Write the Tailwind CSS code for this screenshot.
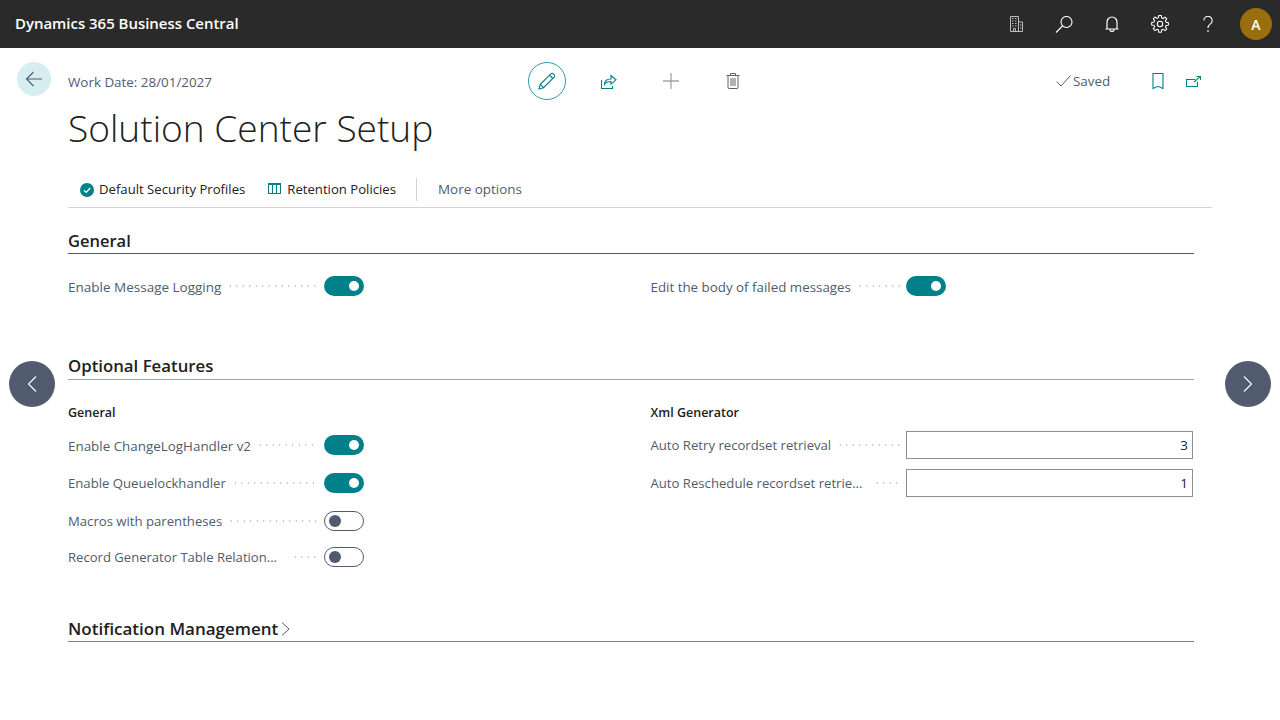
<!DOCTYPE html>
<html><head><meta charset="utf-8"><script src="https://cdn.jsdelivr.net/npm/@tailwindcss/browser@4"></script></head>
<body class="relative w-[1280px] h-[720px] overflow-hidden bg-white font-['Open_Sans',sans-serif] text-[13.4px] text-[#505C6D]">
<header class="flex h-12 items-center bg-[#2A2A2A] pl-[15px]">
  <div class="flex-1 pb-[2px] text-[14.950px] font-semibold text-white">Dynamics 365 Business Central</div>
  <div class="flex w-12 justify-center"><svg width="13" height="16" viewBox="0 0 13 16" fill="none" stroke="#BDBDBD"><path d="M.5 15.500V.5h8V15.500M8.500 6h4v9.500H.5M2 2.500h1.500M5 2.500h1.500M2 5h1.500M5 5h1.500M2 7.500h1.500M5 7.500h1.500M2 10h1.500M5 10h1.500M10 9h1.500M10 12h1.500M3.500 15.500v-3h2v3"/></svg></div>
  <div class="flex w-12 justify-center"><svg width="18" height="17" viewBox="0 0 18 17" fill="none" stroke="#fff" stroke-width="1.100"><circle cx="11.500" cy="6" r="5.500"/><path d="M7.500 10L1 16.500"/></svg></div>
  <div class="flex w-12 justify-center"><svg width="14" height="16" viewBox="0 0 14 16" fill="none" stroke="#fff" stroke-width="1.200"><path d="M2 12.500V6a5 5 0 0 1 10 0v6.500M.5 13h13M5 13.500a2 2 0 0 0 4 0"/></svg></div>
  <div class="flex w-12 justify-center"><svg width="18" height="18" viewBox="0 0 18 18" fill="none" stroke="#fff" stroke-width="1.100"><circle cx="9" cy="9" r="2.700"/><path d="M7.700 1h2.600l.4 2.400 1.500.7 2-1.400 1.800 1.800-1.400 2 .7 1.500 2.400.4v2.600l-2.400.4-.7 1.500 1.400 2-1.800 1.800-2-1.400-1.500.7-.4 2.400H7.700l-.4-2.400-1.500-.7-2 1.400L2 14.700l1.400-2-.7-1.500L.3 10.800V8.200l2.400-.4.700-1.500-1.400-2L3.800 2.500l2 1.400 1.500-.7z" transform="translate(.4 -.4) scale(.96)"/></svg></div>
  <div class="flex w-12 justify-center"><svg width="10" height="16" viewBox="0 0 10 16" fill="none" stroke="#fff" stroke-width="1.100"><path d="M.8 4.500a4.200 4.200 0 1 1 6.600 3.400C5.800 9 5 9.800 5 12M5 14v2"/></svg></div>
  <div class="flex w-12 justify-center"><div class="flex size-8 items-center justify-center rounded-full bg-[#986F0B] text-[14px] font-semibold text-white">A</div></div>
</header>

<div class="flex h-[66px] items-center pl-[17px]">
  <div class="flex size-[34px] -translate-y-[2px] items-center justify-center rounded-full bg-[#D6EEF1]"><svg width="18" height="16" viewBox="0 0 18 16" fill="none" stroke="#505C6D" stroke-width="1.100"><path d="M17 8H1.500M8.500 1L1.500 8l7 7"/></svg></div>
  <div class="ml-[17px] w-[460px] pt-[3px]">Work Date: 28/01/2027</div>
  <div class="flex size-[38px] items-center justify-center rounded-full border border-[#2E9CA3]"><svg width="18" height="18" viewBox="0 0 18 18" fill="none" stroke="#00818A" stroke-width="1.100"><path d="M1 17l1.300-4.600L12.800 1.900a1.700 1.700 0 0 1 2.400 0l.9.900a1.700 1.700 0 0 1 0 2.400L5.600 15.700zM2.300 12.400l3.300 3.300M11.500 3.200l3.300 3.300"/></svg></div>
  <div class="ml-[34px] flex w-[18px] justify-center"><svg width="16" height="15" viewBox="0 0 16 15" fill="none" stroke="#00818A" stroke-width="1.100"><path d="M.5 6v8.500h11V12M3.500 10.500c0-4 2.500-5.500 6.500-5.500V1.500l5 4.300-5 4.300V7.500c-3 0-5 .5-6.500 3z"/></svg></div>
  <div class="ml-[44px] flex w-[18px] justify-center"><svg width="16" height="16" viewBox="0 0 16 16" fill="none" stroke="#A0A4A9" stroke-width="1.300"><path d="M8 0v16M0 8h16"/></svg></div>
  <div class="ml-[44px] flex w-[18px] justify-center"><svg width="14" height="16" viewBox="0 0 14 16" fill="none" stroke="#5E6570" stroke-width="1"><path d="M.5 2.500h13M2 2.500v12a1 1 0 0 0 1 1h8a1 1 0 0 0 1-1v-12M4.500 2.500v-2h5v2M5 5v8M7 5v8M9 5v8"/></svg></div>
  <div class="ml-[313px] flex w-[16px] justify-center"><svg width="15" height="12" viewBox="0 0 15 12" fill="none" stroke="#505C6D" stroke-width="1"><path d="M.7 6.500L5 11 14.500.5"/></svg></div>
  <div class="ml-[2px] pt-[1px]">Saved</div>
  <div class="ml-[42px] flex"><svg width="12" height="16" viewBox="0 0 12 16" fill="none" stroke="#00818A" stroke-width="1.100"><path d="M1 .5h10v15L6 13.300 1 15.500z"/></svg></div>
  <div class="ml-[22px] flex"><svg width="15" height="11" viewBox="0 0 15 11" fill="none" stroke="#00818A" stroke-width="1.100"><path d="M9 3.500H.5v7h11V6M8 6L14 .7M10.500.5h4V4"/></svg></div>
</div>

<main class="pl-[68px]">
  <h1 class="-mt-[2px] h-[60px] text-[37.100px] font-light leading-[32px] text-[#212121]">Solution Center Setup</h1>
  <div class="flex h-[36px] w-[1144px] items-center border-b border-[#D1D3D6] pl-[12px] text-[13.150px] text-[#212121]">
    <svg width="14" height="14" viewBox="0 0 14 14"><circle cx="7" cy="7" r="7" fill="#00818A"/><path d="M4 7.200l2.200 2.200L10.200 5" fill="none" stroke="#fff" stroke-width="1.300"/></svg>
    <span class="ml-[5px]">Default Security Profiles</span>
    <svg class="ml-[23px] -translate-y-[1px]" width="13" height="12" viewBox="0 0 13 12" fill="none" stroke="#00818A" stroke-width="1.100"><path d="M.5.500h12v10H.5zM4.500 1v9.500M8.500 1v9.500M.5 1.500h12" /></svg>
    <span class="ml-[6px]">Retention Policies</span>
    <div class="ml-[20px] h-[23px] w-px bg-[#D1D3D6]"></div>
    <span class="ml-[21px] text-[13.450px] text-[#505C6D]">More options</span>
  </div>

  <section class="mt-[21px] w-[1126px]">
    <h2 class="h-[25px] border-b border-[#505C6D] text-[16.500px] font-semibold leading-[24px] text-[#212121]">General</h2>
    <div class="mt-[22px] grid grid-cols-[296px_295.500px] gap-x-[286.500px]">
      <div class="flex h-5 items-center"><span class="pt-[2px] text-[13.500px]">Enable Message Logging</span><div class="mx-[6px] h-[2px] flex-1 bg-[radial-gradient(circle,#B4B8BF_0.8px,transparent_1px)] bg-[length:6.500px_2px]"></div><div class="flex h-5 w-10 items-center justify-end rounded-full bg-[#00818A] pr-[5px]"><div class="size-[10px] rounded-full bg-white"></div></div></div>
      <div class="flex h-5 items-center"><span class="pt-[2px] text-[13.350px]">Edit the body of failed messages</span><div class="mx-[6px] h-[2px] flex-1 bg-[radial-gradient(circle,#B4B8BF_0.8px,transparent_1px)] bg-[length:6.500px_2px]"></div><div class="flex h-5 w-10 items-center justify-end rounded-full bg-[#00818A] pr-[5px]"><div class="size-[10px] rounded-full bg-white"></div></div></div>
    </div>
  </section>

  <section class="mt-[59px] w-[1126px]">
    <h2 class="h-[25px] border-b border-[#A0A4AE] text-[16.800px] font-semibold leading-[22px] text-[#212121]">Optional Features</h2>
    <div class="mt-[24px] grid grid-cols-[296px_542.500px] gap-x-[286.500px]">
      <div class="flex flex-col">
        <div class="text-[12.500px] font-semibold leading-[17px] text-[#212121]">General</div>
        <div class="mt-[14px] flex h-5 items-center"><span class="pt-[2px]">Enable ChangeLogHandler v2</span><div class="mx-[6px] h-[2px] flex-1 bg-[radial-gradient(circle,#B4B8BF_0.8px,transparent_1px)] bg-[length:6.500px_2px]"></div><div class="flex h-5 w-10 items-center justify-end rounded-full bg-[#00818A] pr-[5px]"><div class="size-[10px] rounded-full bg-white"></div></div></div>
        <div class="mt-[18px] flex h-5 items-center"><span class="pt-[2px] text-[13.150px]">Enable Queuelockhandler</span><div class="mx-[6px] h-[2px] flex-1 bg-[radial-gradient(circle,#B4B8BF_0.8px,transparent_1px)] bg-[length:6.500px_2px]"></div><div class="flex h-5 w-10 items-center justify-end rounded-full bg-[#00818A] pr-[5px]"><div class="size-[10px] rounded-full bg-white"></div></div></div>
        <div class="mt-[18px] flex h-5 items-center"><span class="pt-[2px] text-[13.150px]">Macros with parentheses</span><div class="mx-[6px] h-[2px] flex-1 bg-[radial-gradient(circle,#B4B8BF_0.8px,transparent_1px)] bg-[length:6.500px_2px]"></div><div class="flex h-5 w-10 items-center rounded-full border border-[#505C6D] pl-[4px]"><div class="size-[12px] rounded-full bg-[#505C6D]"></div></div></div>
        <div class="mt-[16px] flex h-5 items-center"><span class="w-[218px] whitespace-nowrap pt-[2px] text-[13.080px]">Record Generator Table Relation...</span><div class="mx-[6px] h-[2px] flex-1 bg-[radial-gradient(circle,#B4B8BF_0.8px,transparent_1px)] bg-[length:6.500px_2px]"></div><div class="flex h-5 w-10 items-center rounded-full border border-[#505C6D] pl-[4px]"><div class="size-[12px] rounded-full bg-[#505C6D]"></div></div></div>
      </div>
      <div class="flex flex-col">
        <div class="text-[12.500px] font-semibold leading-[17px] text-[#212121]">Xml Generator</div>
        <div class="mt-[10px] flex h-[28px] items-center"><span class="pt-[2px] text-[13.150px]">Auto Retry recordset retrieval</span><div class="mx-[6px] h-[2px] flex-1 bg-[radial-gradient(circle,#B4B8BF_0.8px,transparent_1px)] bg-[length:6.500px_2px]"></div><div class="flex h-[28px] w-[287px] items-center justify-end border border-[#8A8F99] pr-[4px] text-[#212121]">3</div></div>
        <div class="mt-[10px] flex h-[28px] items-center"><span class="w-[217px] whitespace-nowrap pt-[2px] text-[13.150px]">Auto Reschedule recordset retrie...</span><div class="mx-[6px] h-[2px] flex-1 bg-[radial-gradient(circle,#B4B8BF_0.8px,transparent_1px)] bg-[length:6.500px_2px]"></div><div class="flex h-[28px] w-[287px] items-center justify-end border border-[#8A8F99] pr-[4px] text-[#212121]">1</div></div>
      </div>
    </div>
  </section>

  <section class="mt-[50px] w-[1126px]">
    <h2 class="flex h-[25px] items-center border-b border-[#7A808B] text-[17px] font-semibold leading-[24px] text-[#212121]">Notification Management<svg class="ml-[3px]" width="9" height="14" viewBox="0 0 9 14" fill="none" stroke="#505C6D" stroke-width="1"><path d="M1 .5L8 7l-7 6.500"/></svg></h2>
  </section>
</main>

<button class="absolute left-[9px] top-[361px] flex size-[46px] items-center justify-center rounded-full bg-[#505C6D]"><svg width="10" height="16" viewBox="0 0 10 16" fill="none" stroke="#fff" stroke-width="1.100"><path d="M9 .5L1.500 8 9 15.500"/></svg></button>
<button class="absolute left-[1225px] top-[361px] flex size-[46px] items-center justify-center rounded-full bg-[#505C6D]"><svg width="10" height="16" viewBox="0 0 10 16" fill="none" stroke="#fff" stroke-width="1.100"><path d="M1 .5L8.500 8 1 15.500"/></svg></button>
</body></html>
